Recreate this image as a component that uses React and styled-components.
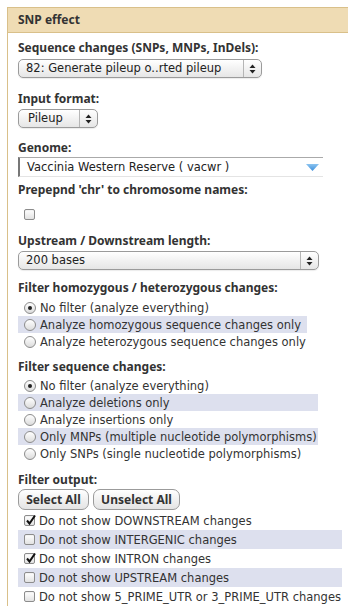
import React from "react";
import styled, { createGlobalStyle } from "styled-components";

const GlobalStyle = createGlobalStyle`
  html, body { margin: 0; padding: 0; background: #fff; overflow: hidden; }
  body { font-family: "DejaVu Sans", "Noto Sans", sans-serif; font-size: 11.5px; color: #333; }
`;

const boldFont = `"Noto Sans", "DejaVu Sans", sans-serif`;

const Page = styled.div`
  padding: 7px 0 0 7px;
`;

const Panel = styled.div`
  width: 420px;
  border-top: 1px solid #d9c08a;
  border-left: 1px solid #d9c08a;
`;

const Header = styled.div`
  height: 24px;
  line-height: 24px;
  padding-left: 10px;
  background: #efdcb4;
  border-bottom: 1px solid #d9c08a;
  font-family: ${boldFont};
  font-weight: bold;
  font-size: 12px;
  color: #333;
`;

const Body = styled.div`
  padding: 7px 0 0 10px;
  display: flex;
  flex-direction: column;
  align-items: flex-start;
`;

const Field = styled.div`
  display: flex;
  flex-direction: column;
  align-items: flex-start;
  margin-bottom: ${(p) => p.$mb ?? 12}px;
`;

const Label = styled.div`
  font-family: ${boldFont};
  font-weight: bold;
  font-size: 12px;
  line-height: 15px;
  color: #333;
  margin-bottom: ${(p) => p.$mb ?? 4}px;
`;

const SelectBox = styled.div`
  box-sizing: border-box;
  width: ${(p) => p.$w}px;
  height: 19px;
  display: flex;
  align-items: stretch;
  border: 1px solid #9b9b9b;
  border-radius: 5px;
  background: linear-gradient(#ffffff, #f2f2f2 50%, #e6e6e6);
  box-shadow: 0 1px 1px rgba(0, 0, 0, 0.08);
`;

const SelectText = styled.div`
  flex: 1;
  padding-left: ${(p) => p.$pl ?? 7}px;
  line-height: 17px;
  color: #222;
  white-space: nowrap;
  overflow: hidden;
`;

const SelectArrows = styled.div`
  width: 17px;
  border-left: 1px solid #b5b5b5;
  display: flex;
  align-items: center;
  justify-content: center;
`;

const Arrows = () => (
  <svg width="7" height="10" viewBox="0 0 7 10">
    <path d="M3.5 0.5 L6.5 4 L0.5 4 Z" fill="#222" />
    <path d="M0.5 6 L6.5 6 L3.5 9.5 Z" fill="#222" />
  </svg>
);

const Select = ({ w, text, pl }) => (
  <SelectBox $w={w}>
    <SelectText $pl={pl}>{text}</SelectText>
    <SelectArrows>
      <Arrows />
    </SelectArrows>
  </SelectBox>
);

const Chosen = styled.div`
  box-sizing: border-box;
  width: 305px;
  height: 20px;
  display: flex;
  align-items: center;
  justify-content: space-between;
  padding: 0 4px 0 7px;
  border-top: 1px solid #aaa;
  border-left: 2px solid #777;
  border-bottom: 1px solid #e4e4e4;
  background: #fff;
  color: #222;
`;

const Triangle = () => (
  <svg width="13" height="7" viewBox="0 0 13 7">
    <defs>
      <linearGradient id="tri" x1="0" y1="0" x2="0" y2="1">
        <stop offset="0" stopColor="#8cc4f0" />
        <stop offset="1" stopColor="#3d8fdc" />
      </linearGradient>
    </defs>
    <path d="M0 0 L13 0 L6.5 7 Z" fill="url(#tri)" />
  </svg>
);

const CheckBox = styled.span`
  box-sizing: border-box;
  position: relative;
  display: inline-block;
  flex: none;
  width: 11px;
  height: 11px;
  border: 1px solid #8c8c8c;
  border-radius: 2px;
  background: linear-gradient(#ffffff, #e2e2e2);
  box-shadow: inset 0 1px 1px rgba(0, 0, 0, 0.05);
`;

const CheckMark = styled.svg`
  position: absolute;
  left: 0px;
  top: -2px;
`;

const Check = ({ checked }) => (
  <CheckBox>
    {checked && (
      <CheckMark width="12" height="12" viewBox="0 0 12 12">
        <path d="M2 6.5 L4.5 9.5 L10 1.5" fill="none" stroke="#111" strokeWidth="2" />
      </CheckMark>
    )}
  </CheckBox>
);

const RadioCircle = styled.span`
  box-sizing: border-box;
  display: inline-flex;
  align-items: center;
  justify-content: center;
  flex: none;
  width: 12px;
  height: 12px;
  border: 1px solid #8c8c8c;
  border-radius: 50%;
  background: linear-gradient(#ffffff, #dcdcdc);
`;

const RadioDot = styled.span`
  width: 4px;
  height: 4px;
  border-radius: 50%;
  background: #222;
`;

const Radio = ({ checked }) => <RadioCircle>{checked && <RadioDot />}</RadioCircle>;

const OptionGroup = styled.div`
  display: flex;
  flex-direction: column;
  align-items: stretch;
  width: max-content;
`;

const OptionRow = styled.div`
  display: flex;
  align-items: center;
  gap: 4px;
  height: ${(p) => p.$h}px;
  padding: 0 1px 0 6px;
  background: ${(p) => (p.$odd ? "#dde0ee" : "transparent")};
  color: #333;
  white-space: nowrap;
`;

const ButtonBar = styled.div`
  display: flex;
  gap: 4px;
  margin-bottom: 1px;
`;

const Button = styled.button`
  box-sizing: border-box;
  width: ${(p) => p.$w}px;
  height: 21px;
  padding: 0;
  border: 1px solid #9b9b9b;
  border-radius: 7px;
  background: linear-gradient(#ffffff, #f1f1f1 50%, #e4e4e4);
  font-family: ${boldFont};
  font-size: 12px;
  font-weight: bold;
  color: #333;
`;

const homo = [
  "No filter (analyze everything)",
  "Analyze homozygous sequence changes only",
  "Analyze heterozygous sequence changes only",
];

const seq = [
  "No filter (analyze everything)",
  "Analyze deletions only",
  "Analyze insertions only",
  "Only MNPs (multiple nucleotide polymorphisms)",
  "Only SNPs (single nucleotide polymorphisms)",
];

const outputs = [
  ["Do not show DOWNSTREAM changes", true],
  ["Do not show INTERGENIC changes", false],
  ["Do not show INTRON changes", true],
  ["Do not show UPSTREAM changes", false],
  ["Do not show 5_PRIME_UTR or 3_PRIME_UTR changes", false],
];

export default function App() {
  return (
    <>
      <GlobalStyle />
      <Page>
        <Panel>
          <Header>SNP effect</Header>
          <Body>
            <Field $mb={13}>
              <Label $mb={4}>Sequence changes (SNPs, MNPs, InDels):</Label>
              <Select w={244} text="82: Generate pileup o..rted pileup" />
            </Field>
            <Field $mb={12}>
              <Label $mb={3}>Input format:</Label>
              <Select w={80} text="Pileup" pl={9} />
            </Field>
            <Field $mb={5}>
              <Label $mb={2}>Genome:</Label>
              <Chosen>
                <span>Vaccinia Western Reserve ( vacwr )</span>
                <Triangle />
              </Chosen>
            </Field>
            <Field $mb={13}>
              <Label $mb={11}>Prepepnd 'chr' to chromosome names:</Label>
              <OptionRow $h={12}>
                <Check />
              </OptionRow>
            </Field>
            <Field $mb={10}>
              <Label $mb={3}>Upstream / Downstream length:</Label>
              <Select w={301} text="200 bases" />
            </Field>
            <Field $mb={9}>
              <Label $mb={4}>Filter homozygous / heterozygous changes:</Label>
              <OptionGroup>
                {homo.map((t, i) => (
                  <OptionRow key={t} $h={17} $odd={i % 2 === 1}>
                    <Radio checked={i === 0} />
                    {t}
                  </OptionRow>
                ))}
              </OptionGroup>
            </Field>
            <Field $mb={10}>
              <Label $mb={3}>Filter sequence changes:</Label>
              <OptionGroup>
                {seq.map((t, i) => (
                  <OptionRow key={t} $h={17} $odd={i % 2 === 1}>
                    <Radio checked={i === 0} />
                    {t}
                  </OptionRow>
                ))}
              </OptionGroup>
            </Field>
            <Field $mb={0}>
              <Label $mb={2}>Filter output:</Label>
              <ButtonBar>
                <Button $w={71}>Select All</Button>
                <Button $w={87}>Unselect All</Button>
              </ButtonBar>
              <OptionGroup>
                {outputs.map(([t, c], i) => (
                  <OptionRow key={t} $h={19} $odd={i % 2 === 1}>
                    <Check checked={c} />
                    {t}
                  </OptionRow>
                ))}
              </OptionGroup>
            </Field>
          </Body>
        </Panel>
      </Page>
    </>
  );
}
